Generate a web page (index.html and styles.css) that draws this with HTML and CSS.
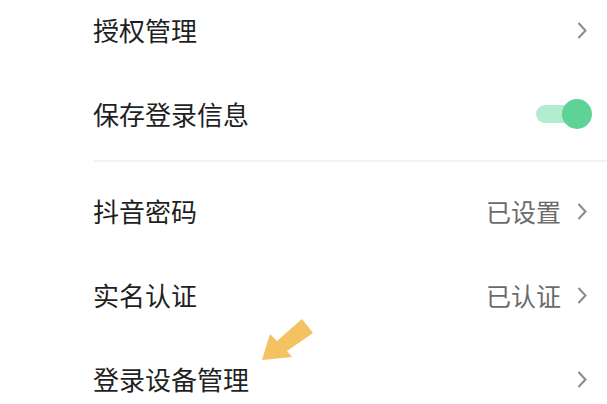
FILE: index.html
```html
<!DOCTYPE html>
<html lang="zh-CN">
<head>
<meta charset="utf-8">
<title>账号与安全</title>
<link rel="stylesheet" href="styles.css">
</head>
<body>
<div class="list">
  <div class="row">
    <span class="label">授权管理</span>
    <span class="right"><svg class="chev" viewBox="0 0 10 17"><path d="M1.5 1 L8.5 8.5 L1.5 16"/></svg></span>
  </div>
  <div class="row">
    <span class="label">保存登录信息</span>
    <span class="right toggle-wrap"><span class="toggle"><span class="track"></span><span class="thumb"></span></span></span>
  </div>
  <div class="divider"></div>
  <div class="row">
    <span class="label">抖音密码</span>
    <span class="right"><span class="value">已设置</span><svg class="chev" viewBox="0 0 10 17"><path d="M1.5 1 L8.5 8.5 L1.5 16"/></svg></span>
  </div>
  <div class="row">
    <span class="label">实名认证</span>
    <span class="right"><span class="value">已认证</span><svg class="chev" viewBox="0 0 10 17"><path d="M1.5 1 L8.5 8.5 L1.5 16"/></svg></span>
  </div>
  <div class="row has-arrow">
    <span class="label">登录设备管理</span>
    <span class="right"><svg class="chev" viewBox="0 0 10 17"><path d="M1.5 1 L8.5 8.5 L1.5 16"/></svg></span>
    <svg class="pointer" viewBox="0 0 60 50" width="60" height="50"><polygon points="4,42 12,16 19,23 44,1 55,15 29,33 34,39" fill="#f4c163"/></svg>
  </div>
</div>
</body>
</html>
```

FILE: styles.css
```css
html, body {
  margin: 0;
  padding: 0;
  background: #ffffff;
  overflow: hidden;
}
body {
  width: 607px;
  height: 404px;
  font-family: "Noto Sans CJK SC", "Noto Sans", sans-serif;
}
.list {
  display: flex;
  flex-direction: column;
  margin-top: -12px;
}
.row {
  position: relative;
  height: 84px;
  display: flex;
  align-items: center;
  justify-content: space-between;
  padding-left: 93px;
  padding-right: 20px;
}
.label {
  font-size: 26px;
  color: #1f1f1f;
  line-height: 1;
}
.right {
  display: flex;
  align-items: center;
}
.value {
  font-size: 25px;
  color: #6b6b6b;
  line-height: 1;
  margin-right: 16px;
}
.chev {
  width: 10px;
  height: 17px;
  fill: none;
  stroke: #8a8a8a;
  stroke-width: 2;
}
.toggle-wrap {
  margin-right: -5px;
}
.toggle {
  position: relative;
  width: 56px;
  height: 30px;
  display: block;
}
.track {
  position: absolute;
  left: 0;
  top: 6px;
  width: 48px;
  height: 18px;
  border-radius: 9px;
  background: #b2ecd0;
}
.thumb {
  position: absolute;
  right: 0;
  top: 0;
  width: 30px;
  height: 30px;
  border-radius: 50%;
  background: #5dd395;
}
.divider {
  margin: 4px 0 7px 93px;
  height: 2px;
  background: #f2f2f2;
}
.pointer {
  position: absolute;
  left: 258px;
  top: -19px;
}
```
